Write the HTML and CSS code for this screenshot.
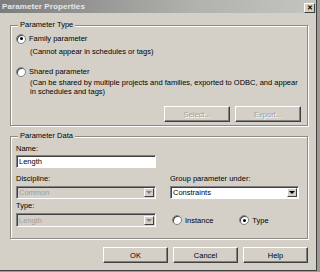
FILE: index.html
```html
<!DOCTYPE html>
<html lang="en">
<head>
    <meta charset="UTF-8">
    <title>Parameter Properties</title>
    <link rel="stylesheet" href="styles.css">
</head>
<body>
    <div class="window">
        <div class="titlebar">
            <span class="title">Parameter Properties</span>
            <span class="close">&#x2715;</span>
        </div>

        <div class="content">
            <fieldset class="group type-group">
                <legend>Parameter Type</legend>
                <div class="radio-row first"><span class="radio checked"></span>Family parameter</div>
                <div class="note">(Cannot appear in schedules or tags)</div>
                <div class="radio-row second"><span class="radio"></span>Shared parameter</div>
                <div class="note tight">(Can be shared by multiple projects and families, exported to ODBC, and appear<br>in schedules and tags)</div>
                <div class="group-buttons">
                    <button class="btn" disabled>Select...</button>
                    <button class="btn" disabled>Export...</button>
                </div>
            </fieldset>

            <fieldset class="group data-group">
                <legend>Parameter Data</legend>
                <div class="data-grid">
                    <div class="label name-label">Name:</div>
                    <div></div>
                    <div class="textbox">Length</div>
                    <div></div>
                    <div class="label gap-label">Discipline:</div>
                    <div class="label gap-label">Group parameter under:</div>
                    <div class="select disabled"><span class="value">Common</span><span class="arrow"><span class="tri"></span></span></div>
                    <div class="select"><span class="value">Constraints</span><span class="arrow"><span class="tri"></span></span></div>
                    <div class="label">Type:</div>
                    <div></div>
                    <div class="select disabled tall"><span class="value">Length</span><span class="arrow"><span class="tri"></span></span></div>
                    <div class="radio-pair">
                        <div class="radio-row"><span class="radio"></span>Instance</div>
                        <div class="radio-row"><span class="radio checked"></span>Type</div>
                    </div>
                </div>
            </fieldset>

            <div class="dialog-buttons">
                <button class="btn">OK</button>
                <button class="btn">Cancel</button>
                <button class="btn">Help</button>
            </div>
        </div>
    </div>
</body>
</html>
```

FILE: styles.css
```css
body {
    margin: 0;
    background-color: #9c9a94;
    font-family: "Liberation Sans", Arial, sans-serif;
    font-size: 7.5px;
    color: #000;
}

.window {
    width: 316px;
    height: 270px;
    background-color: #d4d0c8;
    border-right: 1px solid #404040;
    border-bottom: 1px solid #404040;
}

.titlebar {
    height: 13px;
    display: flex;
    align-items: center;
    justify-content: space-between;
    padding: 0 1px 0 2px;
    background: linear-gradient(to right, #7c7c7c, #b0b0ac 60%, #c4c4c0);
}

.title {
    color: #e8e8e8;
    font-weight: bold;
    font-size: 8px;
    letter-spacing: 0.1px;
}

.close {
    width: 9px;
    height: 8px;
    margin-top: 2px;
    display: flex;
    align-items: center;
    justify-content: center;
    font-size: 7px;
    font-weight: bold;
    background-color: #d4d0c8;
    border: 1px solid;
    border-color: #fff #404040 #404040 #fff;
}

.content {
    padding: 7px 8px 0 10px;
}

.group {
    margin: 0;
    padding: 0 6px 0 5px;
    border: 1px solid #8c8a86;
    box-shadow: inset 1px 1px 0 #fff, 1px 1px 0 #fff;
    min-width: 0;
}

.group legend {
    padding: 0 2px;
    margin-left: 2px;
    line-height: 10px;
    background-color: #d4d0c8;
}

.type-group {
    padding-bottom: 3px;
}

.radio-row {
    display: flex;
    align-items: center;
    gap: 3px;
    height: 11px;
}

.radio-row.first {
    margin-top: 3px;
}

.radio-row.second {
    margin-top: 9px;
}

.radio {
    width: 8px;
    height: 8px;
    border-radius: 50%;
    background-color: #fff;
    border: 1px solid #808080;
    box-shadow: inset 1px 1px 0 #404040;
    display: flex;
    align-items: center;
    justify-content: center;
}

.radio.checked::after {
    content: "";
    width: 3px;
    height: 3px;
    border-radius: 50%;
    background-color: #000;
}

.note {
    margin-top: 3px;
    margin-left: 14px;
    line-height: 10px;
    white-space: nowrap;
}

.note.tight {
    margin-top: 1px;
    line-height: 9px;
}

.group-buttons {
    display: flex;
    justify-content: flex-end;
    gap: 5px;
    margin-top: 10px;
}

.btn {
    width: 66px;
    height: 16px;
    padding: 0;
    font-family: inherit;
    font-size: 7.5px;
    color: #000;
    background-color: #d4d0c8;
    border: 1px solid;
    border-color: #fff #404040 #404040 #fff;
    box-shadow: inset -1px -1px 0 #808080;
}

.btn:disabled {
    color: #a09e9a;
    text-shadow: 1px 1px 0 #fff;
}

.data-group {
    margin-top: 5px;
    padding-bottom: 11px;
}

.data-grid {
    display: grid;
    grid-template-columns: 140px 129px;
    column-gap: 14px;
    align-items: center;
}

.label {
    line-height: 10px;
    margin-top: 2px;
    margin-bottom: 2px;
}

.name-label {
    margin-top: 3px;
    margin-bottom: 1px;
}

.gap-label {
    margin-top: 6px;
}

.textbox,
.select {
    height: 13px;
    box-sizing: border-box;
    border: 1px solid;
    border-color: #808080 #fff #fff #808080;
    box-shadow: inset 1px 1px 0 #404040;
    background-color: #fff;
    display: flex;
    align-items: center;
    padding-left: 2px;
}

.select {
    justify-content: space-between;
    padding-right: 1px;
}

.select.tall {
    height: 14px;
}

.select.disabled {
    background-color: #d4d0c8;
    color: #a09e9a;
}

.arrow {
    width: 10px;
    height: 9px;
    box-sizing: border-box;
    background-color: #d4d0c8;
    border: 1px solid;
    border-color: #fff #404040 #404040 #fff;
    display: flex;
    align-items: center;
    justify-content: center;
}

.tri {
    width: 0;
    height: 0;
    border-left: 3px solid transparent;
    border-right: 3px solid transparent;
    border-top: 3px solid #000;
}

.select.disabled .tri {
    border-top-color: #808080;
}

.radio-pair {
    display: flex;
    gap: 26px;
    padding-left: 2px;
}

.dialog-buttons {
    display: flex;
    justify-content: flex-end;
    gap: 5px;
    margin-top: 8px;
}

.dialog-buttons .btn {
    width: 65px;
}
```
